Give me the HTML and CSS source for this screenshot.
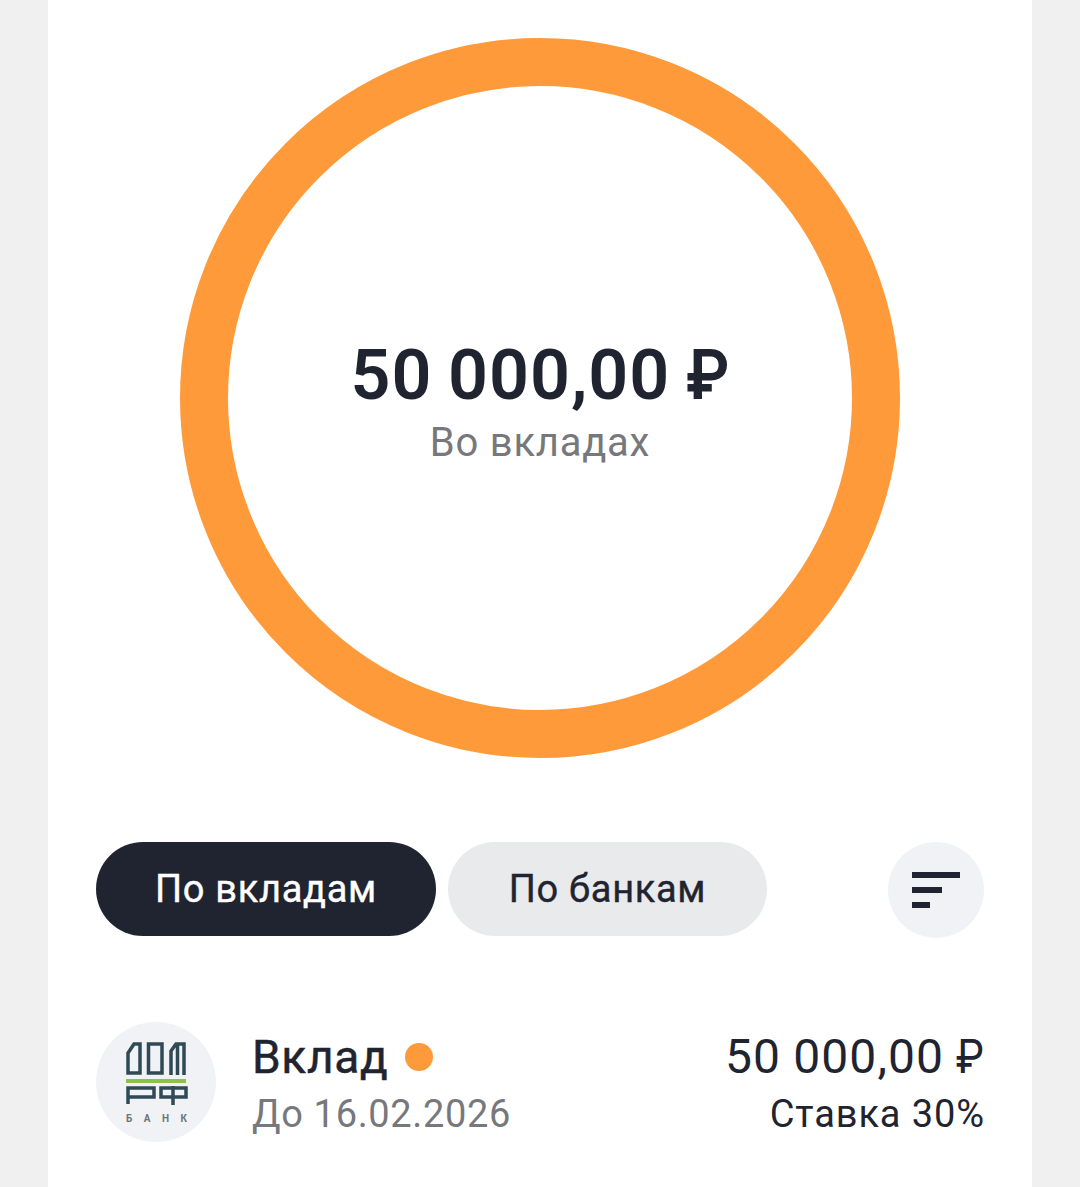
FILE: index.html
```html
<!DOCTYPE html>
<html lang="ru">
<head>
    <meta charset="UTF-8">
    <title>Вклады</title>
    <link rel="stylesheet" href="styles.css">
</head>
<body>
<div class="card">
    <div class="ring">
        <div class="total">50 000,00 <span class="rub">₽</span></div>
        <div class="total-label">Во вкладах</div>
    </div>

    <div class="filters">
        <div class="tab tab-active">По вкладам</div>
        <div class="tab">По банкам</div>
        <div class="sort">
            <svg width="48" height="36" viewBox="0 0 48 36">
                <rect x="0" y="0" width="48" height="6" fill="#1f2430"/>
                <rect x="0" y="15" width="30" height="6" fill="#1f2430"/>
                <rect x="0" y="30" width="18" height="6" fill="#1f2430"/>
            </svg>
        </div>
    </div>

    <div class="deposit">
        <div class="bank-logo">
            <svg width="120" height="120" viewBox="0 0 120 120">
                <g fill="none" stroke="#2f4a56" stroke-width="3.500">
                    <path d="M32 51V31L38 22H44V51Z"/>
                    <rect x="52.500" y="22" width="13.500" height="29"/>
                    <path d="M75 53V29L80 22H88V53M81.500 22V53"/>
                    <path d="M32 82V66H58V75H32"/>
                    <path d="M65 66H90V75H65ZM77 64V83"/>
                </g>
                <rect x="30" y="57" width="60" height="4" fill="#8dc04f"/>
                <text x="30" y="100" class="bank-text">БАНК</text>
            </svg>
        </div>
        <div class="deposit-info">
            <div class="deposit-name">Вклад <span class="dot"></span></div>
            <div class="deposit-date">До 16.02.2026</div>
        </div>
        <div class="deposit-right">
            <div class="deposit-sum">50 000,00 <span class="rub">₽</span></div>
            <div class="deposit-rate">Ставка 30%</div>
        </div>
    </div>
</div>
</body>
</html>
```

FILE: styles.css
```css
html, body {
    margin: 0;
    padding: 0;
}

body {
    height: 1187px;
    overflow: hidden;
    background-color: #f0f0f0;
    font-family: Roboto, "Liberation Sans", sans-serif;
    color: #1f2430;
}

.card {
    width: 984px;
    height: 1187px;
    margin: 0 auto;
    padding: 38px 48px 0;
    box-sizing: border-box;
    background-color: #fff;
}

.ring {
    width: 720px;
    height: 720px;
    margin: 0 auto;
    padding-top: 6px;
    box-sizing: border-box;
    border: 48px solid #ff9a3a;
    border-radius: 50%;
    display: flex;
    flex-direction: column;
    align-items: center;
    justify-content: center;
}

.rub {
    display: inline-block;
    letter-spacing: 0;
    transform-origin: left center;
}

.total {
    font-size: 70px;
    line-height: 80px;
    font-weight: 600;
    letter-spacing: 1px;
    word-spacing: -3px;
    white-space: nowrap;
}

.total .rub {
    margin-right: -5px;
    transform: scaleX(0.89);
}

.total-label {
    margin-top: 4px;
    font-size: 40px;
    line-height: 48px;
    letter-spacing: 0.75px;
    color: #77787b;
}

.filters {
    display: flex;
    align-items: flex-start;
    margin-top: 84px;
}

.tab {
    width: 319px;
    height: 94px;
    margin-right: 12px;
    border-radius: 47px;
    background-color: #e9eaec;
    font-size: 38px;
    line-height: 94px;
    letter-spacing: 0.7px;
    -webkit-text-stroke: 0.4px currentColor;
    text-align: center;
    white-space: nowrap;
}

.tab-active {
    width: 340px;
    background-color: #1f2430;
    color: #fff;
}

.sort {
    width: 96px;
    height: 96px;
    margin-left: auto;
    border-radius: 50%;
    background-color: #f0f2f5;
    display: flex;
    align-items: center;
    justify-content: center;
}

.deposit {
    display: flex;
    align-items: center;
    margin-top: 84px;
}

.bank-logo {
    width: 120px;
    height: 120px;
    border-radius: 50%;
    background-color: #f0f2f5;
    margin-right: 36px;
}

.bank-text {
    font-size: 10px;
    font-weight: 700;
    letter-spacing: 11.500px;
    fill: #6a757b;
}

.deposit-info {
    padding-top: 6px;
}

.deposit-name {
    font-size: 46px;
    line-height: 56px;
    letter-spacing: 0.7px;
    -webkit-text-stroke: 0.5px currentColor;
    display: flex;
    align-items: center;
    gap: 17px;
}

.dot {
    width: 28px;
    height: 28px;
    border-radius: 50%;
    background-color: #ff9a3a;
}

.deposit-date {
    margin-top: 1px;
    font-size: 38px;
    line-height: 56px;
    letter-spacing: 0.65px;
    color: #77787b;
}

.deposit-right {
    margin-left: auto;
    padding-top: 6px;
    text-align: right;
}

.deposit-sum {
    font-size: 48px;
    line-height: 56px;
    letter-spacing: 1.1px;
    word-spacing: -1px;
    white-space: nowrap;
}

.deposit-sum .rub {
    margin-right: -4px;
    transform: scaleX(0.87);
}

.deposit-rate {
    margin-top: 1px;
    margin-right: -1px;
    font-size: 38px;
    line-height: 56px;
    letter-spacing: 0.9px;
}
```
